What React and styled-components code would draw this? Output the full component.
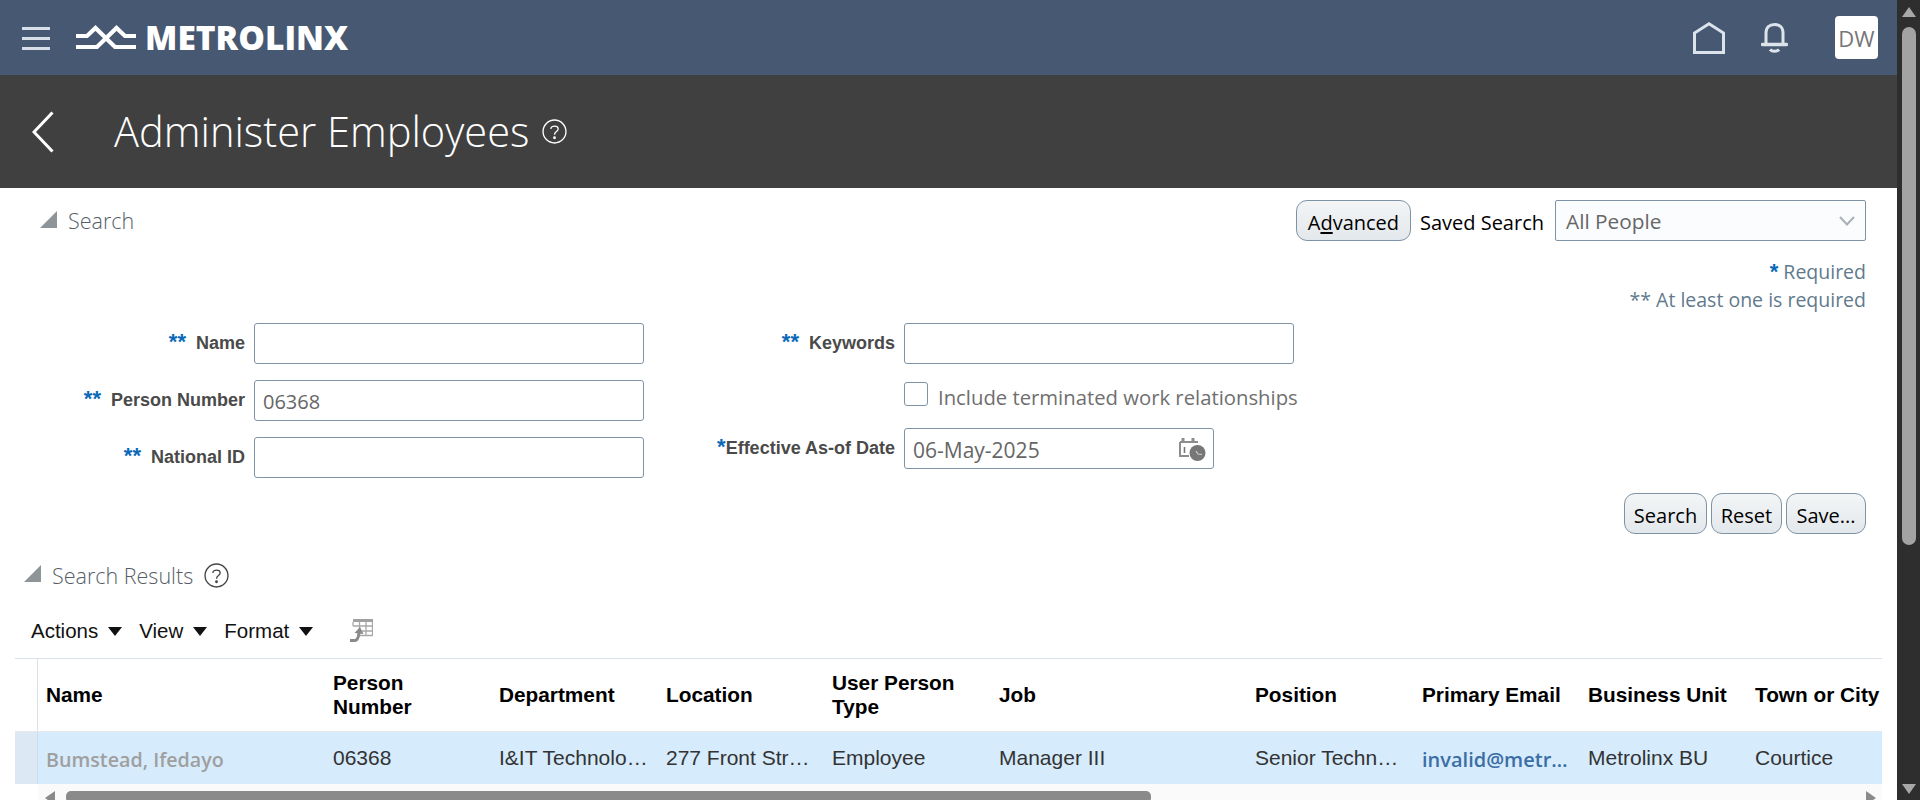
import React from "react";
import styled, { createGlobalStyle } from "styled-components";

const ui = `"Open Sans", "Noto Sans", sans-serif`;
const arial = `"Liberation Sans", Arial, sans-serif`;

const Global = createGlobalStyle`
  html, body { margin: 0; padding: 0; height: 100%; overflow: hidden; background: #fff; }
  * { box-sizing: border-box; }
`;

const Page = styled.div`
  display: flex;
  width: 1920px;
  height: 800px;
  overflow: hidden;
  font-family: ${ui};
`;
const Main = styled.div`
  flex: 1;
  min-width: 0;
  display: flex;
  flex-direction: column;
`;
const VScroll = styled.div`
  width: 23px;
  background: #2e2e2e;
  display: flex;
  flex-direction: column;
  align-items: center;
  padding: 7px 0 6px 0;
`;
const VThumb = styled.div`
  width: 14px;
  height: 518px;
  margin-top: 10px;
  border-radius: 7px;
  background: #a3a3a3;
`;
const Spacer = styled.div`
  flex: 1;
`;
const TopBar = styled.header`
  height: 75px;
  background: #465872;
  display: flex;
  align-items: center;
  padding: 0 19px 0 22px;
`;
const Burger = styled.div`
  width: 28px;
  height: 23px;
  display: flex;
  flex-direction: column;
  justify-content: space-between;
  margin-top: 1px;
  span {
    height: 3px;
    background: #d8dfe8;
  }
`;
const Logo = styled.div`
  display: flex;
  align-items: center;
  margin-left: 26px;
  gap: 9px;
`;
const LogoText = styled.span`
  font-family: ${ui};
  font-weight: 800;
  font-size: 33.5px;
  line-height: 1;
  color: #fff;
`;
const TopIcons = styled.div`
  margin-left: auto;
  display: flex;
  align-items: center;
`;
const Avatar = styled.div`
  width: 43px;
  height: 43px;
  margin-left: 47px;
  border-radius: 4px;
  background: #fff;
  color: #777;
  font-size: 22px;
  display: flex;
  align-items: center;
  justify-content: center;
`;
const TitleBar = styled.div`
  height: 113px;
  background: #404040;
  display: flex;
  align-items: center;
  padding-left: 32px;
  color: #fff;
`;
const Title = styled.h1`
  margin: 0 0 2px 60px;
  font-family: ${ui};
  font-weight: 300;
  font-size: 41.6px;
  color: #fff;
`;
const TitleHelp = styled.span`
  display: flex;
  margin-left: 13px;
`;
const SearchPanel = styled.section`
  height: 376px;
  padding: 12px 31px 0 0;
  display: flex;
  flex-direction: column;
`;
const SearchTop = styled.div`
  display: flex;
  align-items: center;
  height: 41px;
`;
const Triangle = styled.span`
  width: 0;
  height: 0;
  margin-bottom: 3px;
  border-style: solid;
  border-width: 0 0 ${(p) => p.$size}px ${(p) => p.$size}px;
  border-color: transparent transparent #8f9499 transparent;
`;
const PanelTitle = styled.div`
  display: flex;
  align-items: center;
  gap: 11px;
  margin-left: ${(p) => p.$left}px;
  font-weight: 300;
  font-size: 21.5px;
  color: #555e66;
`;
const Button = styled.button`
  height: 41px;
  width: ${(p) => p.$w}px;
  padding: 3px 0 0;
  border: 1px solid #7e93a5;
  border-radius: 11px;
  background: linear-gradient(#f3f5f6, #e3e8ec);
  font-family: ${ui};
  font-size: 20px;
  font-weight: 500;
  color: #000;
  u {
    text-underline-offset: 2px;
  }
`;
const SavedLabel = styled.span`
  margin: 3px 0 0 9px;
  font-size: 20px;
  font-weight: 500;
  color: #000;
`;
const Select = styled.div`
  width: 311px;
  height: 41px;
  margin-left: 11px;
  padding: 0 10px;
  border: 1px solid #7e93a5;
  border-radius: 2px;
  background: #fbfcfe;
  color: #666;
  font-size: 20.8px;
  display: flex;
  align-items: center;
  justify-content: space-between;
`;
const Notes = styled.div`
  height: 82px;
  padding-top: 17px;
  text-align: right;
  font-size: 19.5px;
  line-height: 28px;
  color: #5f7a8c;
`;
const Star = styled.span`
  color: #0a6ab8;
  font-family: ${arial};
  font-size: 22px;
  line-height: 0;
  font-weight: 700;
`;
const FormGrid = styled.div`
  display: flex;
  height: 170px;
`;
const FormCol = styled.div`
  width: ${(p) => p.$w}px;
  display: flex;
  flex-direction: column;
`;
const Field = styled.div`
  display: flex;
  align-items: center;
  height: 41px;
  margin-bottom: ${(p) => p.$mb ?? 16}px;
`;
const Label = styled.label`
  width: ${(p) => p.$w}px;
  padding-right: 9px;
  text-align: right;
  font-family: ${arial};
  font-weight: 700;
  font-size: 18px;
  color: #4a4a4a;
  white-space: nowrap;
`;
const Input = styled.div`
  width: ${(p) => p.$w}px;
  height: 41px;
  padding: 2px 8px 0;
  border: 1px solid #7e93a5;
  border-radius: 3px;
  background: #fff;
  font-size: ${(p) => p.$size ?? 20}px;
  color: #666;
  display: flex;
  align-items: center;
  justify-content: space-between;
`;
const CheckRow = styled.div`
  display: flex;
  align-items: center;
  height: 24px;
  margin: 18px 0 22px 254px;
  font-size: 20.3px;
  color: #6f6f6f;
  white-space: nowrap;
`;
const Check = styled.span`
  width: 24px;
  height: 24px;
  margin-right: 10px;
  border: 1px solid #7e93a5;
  border-radius: 3px;
`;
const CheckText = styled.span`
  margin-top: 6px;
`;
const FormActions = styled.div`
  display: flex;
  justify-content: flex-end;
  gap: 4px;
`;
const Results = styled.section`
  flex: 1;
  min-height: 0;
  display: flex;
  flex-direction: column;
`;
const ResultsHead = styled.div`
  display: flex;
  align-items: center;
  height: 22px;
  padding-left: 24px;
`;
const Toolbar = styled.div`
  display: flex;
  align-items: center;
  height: 44px;
  margin: 23px 0 5px;
  padding-left: 31px;
  font-family: ${arial};
  font-size: 20.5px;
  color: #111;
`;
const Menu = styled.span`
  display: flex;
  align-items: center;
  margin-right: ${(p) => p.$mr}px;
  &::after {
    content: "";
    margin-left: 10px;
    border-style: solid;
    border-width: 9px 7px 0 7px;
    border-color: #111 transparent transparent transparent;
  }
`;
const TableWrap = styled.div`
  margin-left: 15px;
  width: 1867px;
  overflow: hidden;
  border-top: 1px solid #d9e2ea;
`;
const Table = styled.table`
  table-layout: fixed;
  width: 1899px;
  border-collapse: separate;
  border-spacing: 0;
  font-family: ${arial};
`;
const Th = styled.th`
  height: 73px;
  padding: 0 8px;
  text-align: left;
  vertical-align: middle;
  font-size: 20.8px;
  font-weight: 700;
  line-height: 24px;
  color: #000;
  border-bottom: 1px solid #e4e9ee;
  white-space: normal;
  &:first-child {
    border-right: 1px solid #d9e2ea;
    padding: 0;
  }
`;
const Td = styled.td`
  height: 52px;
  padding: 0 8px;
  background: #d6ebfc;
  font-size: 21px;
  color: #333;
  white-space: nowrap;
  &:first-child {
    padding: 0;
    background: #dce8f3;
    border-right: 1px solid #d0dde9;
  }
`;
const NameCell = styled(Td)`
  font-family: ${ui};
  font-size: 19.7px;
  font-weight: 600;
  color: #9f9f9f;
  padding-top: 3px;
`;
const MailCell = styled(Td)`
  font-family: ${ui};
  font-size: 20px;
  font-weight: 600;
  color: #3b6ea5;
  padding-top: 3px;
`;
const HScroll = styled.div`
  height: 16px;
  margin-left: 38px;
  width: 1844px;
  background: #fafafa;
  padding-top: 7px;
  display: flex;
`;
const HThumb = styled.div`
  width: 1085px;
  height: 12px;
  margin-left: 11px;
  border-radius: 5px;
  background: #8a8a8a;
`;
const Arrow = styled.span`
  width: 0;
  height: 0;
  margin-left: ${(p) => p.$ml}px;
  border-style: solid;
  border-width: ${(p) => (p.$right ? "7px 0 7px 10px" : "7px 10px 7px 0")};
  border-color: ${(p) =>
    p.$right
      ? "transparent transparent transparent #8a8a8a"
      : "transparent #8a8a8a transparent transparent"};
`;
const VArrow = styled.span`
  width: 0;
  height: 0;
  border-style: solid;
  border-width: ${(p) => (p.$down ? "10px 7px 0 7px" : "0 7px 10px 7px")};
  border-color: ${(p) =>
    p.$down
      ? "#a8a8a8 transparent transparent transparent"
      : "transparent transparent #a8a8a8 transparent"};
`;

const columns = [
  { w: 23, title: "" },
  { w: 287, title: "Name" },
  { w: 166, title: "Person Number" },
  { w: 167, title: "Department" },
  { w: 166, title: "Location" },
  { w: 167, title: "User Person Type" },
  { w: 256, title: "Job" },
  { w: 167, title: "Position" },
  { w: 166, title: "Primary Email" },
  { w: 167, title: "Business Unit" },
  { w: 167, title: "Town or City" },
];

function LogoMark() {
  return (
    <svg width="60" height="25" viewBox="0 0 60 25" fill="none" stroke="#fff" strokeWidth="4.2">
      <path d="M0 11 H11 L19.5 3 L39 22 H60" />
      <path d="M0 22 H21 L40.5 3 L49 11 H60" />
    </svg>
  );
}

function HomeIcon() {
  return (
    <svg width="32" height="32" viewBox="0 0 32 32" fill="none" stroke="#dde3ea" strokeWidth="3">
      <path d="M1.5 30.5 V11 L16 1.8 L30.5 11 V30.5 Z" />
    </svg>
  );
}

function BellIcon() {
  return (
    <svg width="27" height="30" viewBox="0 0 27 30" fill="none" stroke="#dde3ea" strokeWidth="3" style={{ marginLeft: 36 }}>
      <path d="M5 20 V10 C5 4.5 8.5 1.5 13.5 1.5 C18.5 1.5 22 4.5 22 10 V20" />
      <path d="M1.5 21.5 H25.5" strokeWidth="3.4" strokeLinecap="round" />
      <path d="M9 26.5 C11 28.8 16 28.8 18 26.5" />
    </svg>
  );
}

function HelpIcon({ size, color }) {
  return (
    <svg width={size} height={size} viewBox="0 0 24 24" fill="none" stroke={color} strokeWidth="1.3">
      <circle cx="12" cy="12" r="11" />
      <path d="M8.5 9.5 C8.5 6 15.5 6 15.5 9.5 C15.5 12 12 12 12 15" />
      <circle cx="12" cy="18" r="0.7" fill={color} />
    </svg>
  );
}

function CalendarIcon() {
  return (
    <svg width="27" height="23" viewBox="0 0 27 23" fill="none" style={{ marginRight: -1 }}>
      <path d="M1 4 H19 M1 4 V18 H10" stroke="#8d8d8d" strokeWidth="2" />
      <path d="M4 0 V4 M14 0 V4" stroke="#8d8d8d" strokeWidth="3" />
      <path d="M5.5 9 V15" stroke="#777" strokeWidth="1.6" />
      <circle cx="18.5" cy="15" r="8" fill="#777" />
      <path d="M17 13 L19 16 L23 16.5" stroke="#cfcfcf" strokeWidth="1.2" />
    </svg>
  );
}

function FreezeIcon() {
  return (
    <svg width="23" height="23" viewBox="0 0 23 23" fill="none" style={{ marginLeft: 37, marginTop: -1 }}>
      <path d="M3 0 H23 V3 H3 Z" fill="#a0a0a0" />
      <path d="M3 3 V7 M9.5 3 V17 M16 3 V17 M22.5 3 V17 M3 7 H22.5 M12 12 H22.5 M9.5 16.5 H22.5" stroke="#a8a8a8" strokeWidth="1.3" />
      <path d="M0 21.5 H5 Q8 21.5 9 14" stroke="#8a8a8a" strokeWidth="3" />
      <path d="M4.5 14 L10 8 L13.5 15 Z" fill="#8a8a8a" />
    </svg>
  );
}

function Chevron() {
  return (
    <svg width="22" height="42" viewBox="0 0 22 42" fill="none" stroke="#fff" strokeWidth="3">
      <path d="M20.5 1.5 L2 21 L20.5 40.5" />
    </svg>
  );
}

export default function App() {
  return (
    <Page>
      <Global />
      <Main>
        <TopBar>
          <Burger>
            <span />
            <span />
            <span />
          </Burger>
          <Logo>
            <LogoMark />
            <LogoText>METROLINX</LogoText>
          </Logo>
          <TopIcons>
            <HomeIcon />
            <BellIcon />
            <Avatar>DW</Avatar>
          </TopIcons>
        </TopBar>
        <TitleBar>
          <Chevron />
          <Title>Administer Employees</Title>
          <TitleHelp>
            <HelpIcon size={25} color="#fff" />
          </TitleHelp>
        </TitleBar>
        <SearchPanel>
          <SearchTop>
            <PanelTitle $left={40}>
              <Triangle $size={17} />
              Search
            </PanelTitle>
            <Spacer />
            <Button $w={115}>
              A<u>d</u>vanced
            </Button>
            <SavedLabel>Saved Search</SavedLabel>
            <Select>
              All People
              <svg width="16" height="10" viewBox="0 0 16 10" fill="none" stroke="#a8b0b6" strokeWidth="2">
                <path d="M1 1 L8 8.5 L15 1" />
              </svg>
            </Select>
          </SearchTop>
          <Notes>
            <div>
              <Star>*</Star> Required
            </div>
            <div>** At least one is required</div>
          </Notes>
          <FormGrid>
            <FormCol $w={650}>
              <Field>
                <Label $w={254}>
                  <Star>**</Star>&nbsp;&nbsp;Name
                </Label>
                <Input $w={390} />
              </Field>
              <Field>
                <Label $w={254}>
                  <Star>**</Star>&nbsp;&nbsp;Person Number
                </Label>
                <Input $w={390}>06368</Input>
              </Field>
              <Field>
                <Label $w={254}>
                  <Star>**</Star>&nbsp;&nbsp;National ID
                </Label>
                <Input $w={390} />
              </Field>
            </FormCol>
            <FormCol $w={650}>
              <Field $mb={0}>
                <Label $w={254}>
                  <Star>**</Star>&nbsp;&nbsp;Keywords
                </Label>
                <Input $w={390} />
              </Field>
              <CheckRow>
                <Check />
                <CheckText>Include terminated work relationships</CheckText>
              </CheckRow>
              <Field $mb={0}>
                <Label $w={254}>
                  <Star>*</Star>Effective As-of Date
                </Label>
                <Input $w={310} $size={21}>
                  06-May-2025
                  <CalendarIcon />
                </Input>
              </Field>
            </FormCol>
          </FormGrid>
          <FormActions>
            <Button $w={83}>Search</Button>
            <Button $w={71}>Reset</Button>
            <Button $w={80}>Save...</Button>
          </FormActions>
        </SearchPanel>
        <Results>
          <ResultsHead>
            <PanelTitle $left={0}>
              <Triangle $size={17} />
              Search Results
              <HelpIcon size={25} color="#444" />
            </PanelTitle>
          </ResultsHead>
          <Toolbar>
            <Menu $mr={17}>Actions</Menu>
            <Menu $mr={17}>View</Menu>
            <Menu $mr={0}>Format</Menu>
            <FreezeIcon />
          </Toolbar>
          <TableWrap>
            <Table>
              <colgroup>
                {columns.map((c) => (
                  <col key={c.title} style={{ width: c.w }} />
                ))}
              </colgroup>
              <thead>
                <tr>
                  {columns.map((c) => (
                    <Th key={c.title}>{c.title}</Th>
                  ))}
                </tr>
              </thead>
              <tbody>
                <tr>
                  <Td />
                  <NameCell>Bumstead, Ifedayo</NameCell>
                  <Td>06368</Td>
                  <Td>I&amp;IT Technolo…</Td>
                  <Td>277 Front Str…</Td>
                  <Td>Employee</Td>
                  <Td>Manager III</Td>
                  <Td>Senior Techn…</Td>
                  <MailCell>invalid@metr…</MailCell>
                  <Td>Metrolinx BU</Td>
                  <Td>Courtice</Td>
                </tr>
              </tbody>
            </Table>
          </TableWrap>
          <HScroll>
            <Arrow $ml={7} />
            <HThumb />
            <Arrow $ml={715} $right />
          </HScroll>
        </Results>
      </Main>
      <VScroll>
        <VArrow />
        <VThumb />
        <Spacer />
        <VArrow $down />
      </VScroll>
    </Page>
  );
}
